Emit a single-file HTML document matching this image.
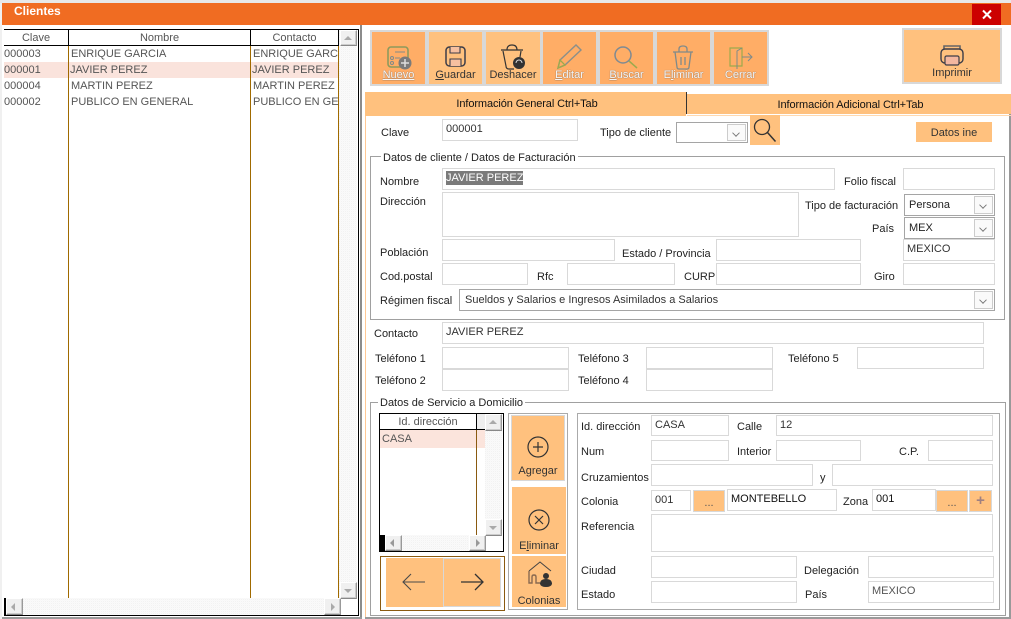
<!DOCTYPE html>
<html><head><meta charset="utf-8"><style>
html,body{margin:0;padding:0;background:#fff;width:1011px;height:619px;overflow:hidden}
body{position:relative;font:11px/14px "Liberation Sans",sans-serif;color:#222}
div,span.a,svg{position:absolute;box-sizing:border-box}
.l{white-space:nowrap;color:#222;margin-top:1px}
.i{border:1px solid #d9d9d9;background:#fff;padding:2px 0 0 3px;white-space:nowrap;color:#333;line-height:14px;overflow:hidden}
.c{border:1px solid #a5a5a5;background:#fff;padding:3px 0 0 4px;color:#222;white-space:nowrap}
.cb{position:absolute;right:1px;top:1px;bottom:1px;width:17px;border:1px solid #ccc;background:#fafafa}
.cb:after{content:"";position:absolute;left:5px;top:5px;width:5px;height:5px;border-right:1px solid #777;border-bottom:1px solid #777;transform:rotate(45deg) scale(.9)}
.tb{border:2px solid #d8d8d8;background:#ffad66;text-align:center;color:#f6f6f6}
.tb.lt{background:#ffc17e;color:#333}
.tb span{position:absolute;left:0;right:0;top:36px;font-size:11px;line-height:14px;text-shadow:0 0 1px #555}
.tb.lt span{text-shadow:none}
.tb svg{left:0;top:0}
.o{background:#ffc17e;text-align:center;color:#333}
.sb{background:#f0f0f0;border:1px solid;border-color:#fff #999 #888 #fff;box-shadow:inset -1px -1px #ccc}
.t{width:0;height:0}
.hatch{background:#fafafa;background-image:linear-gradient(45deg,#f0f0f0 25%,transparent 25%,transparent 75%,#f0f0f0 75%);background-size:2px 2px}
.r{color:#555;white-space:nowrap;overflow:hidden;line-height:14px}
.b{background:#000}.br{background:#a06a00}
.g{border:1px solid #a0a0a0}
.lg{background:#fff;padding:0 2px;white-space:nowrap;color:#222;margin-top:1px}
</style></head><body>
<!-- title -->
<div style="left:0;top:0;width:1011px;height:3px;background:#e8e8e8"></div>
<div style="left:0;top:3px;width:2px;height:616px;background:#f0f0f0"></div>
<div style="left:2px;top:3px;width:1009px;height:22px;background:#f06c22"></div>
<div style="left:14px;top:4px;font-size:12px;font-weight:bold;color:#fff;line-height:15px">Clientes</div>
<div style="left:972px;top:4px;width:29px;height:21px;background:#cc0000"></div>
<svg style="left:972px;top:4px" width="29" height="21"><path d="M11 6.5l8 8M19 6.500l-8 8" stroke="#fff" stroke-width="2"/></svg>

<!-- grid -->
<div style="left:4px;top:62px;width:335px;height:16px;background:#fae3dc"></div>
<div style="left:4px;top:29px;width:355px;height:1px;background:#000"></div>
<div style="left:4px;top:45px;width:335px;height:1px;background:#000"></div>
<div class="r" style="left:4px;top:31px;width:64px;text-align:center">Clave</div>
<div class="r" style="left:69px;top:31px;width:181px;text-align:center">Nombre</div>
<div class="r" style="left:251px;top:31px;width:87px;text-align:center">Contacto</div>
<div class="b" style="left:68px;top:29px;width:1px;height:16px"></div>
<div class="b" style="left:250px;top:29px;width:1px;height:16px"></div>
<div class="b" style="left:338px;top:29px;width:1px;height:16px"></div>
<div class="br" style="left:68px;top:46px;width:1px;height:552px"></div>
<div class="br" style="left:250px;top:46px;width:1px;height:552px"></div>
<div class="br" style="left:338px;top:46px;width:1px;height:552px"></div>
<div class="r" style="left:4px;top:47px;width:63px">000003</div>
<div class="r" style="left:71px;top:47px;width:178px">ENRIQUE GARCIA</div>
<div class="r" style="left:253px;top:47px;width:85px">ENRIQUE GARCIA</div>
<div class="r" style="left:4px;top:63px;width:63px">000001</div>
<div class="r" style="left:70px;top:63px;width:178px">JAVIER PEREZ</div>
<div class="r" style="left:252px;top:63px;width:85px">JAVIER PEREZ</div>
<div class="r" style="left:4px;top:79px;width:63px">000004</div>
<div class="r" style="left:71px;top:79px;width:178px">MARTIN PEREZ</div>
<div class="r" style="left:253px;top:79px;width:85px">MARTIN PEREZ</div>
<div class="r" style="left:4px;top:95px;width:63px">000002</div>
<div class="r" style="left:71px;top:95px;width:178px">PUBLICO EN GENERAL</div>
<div class="r" style="left:253px;top:95px;width:85px">PUBLICO EN GENERAL</div>
<!-- grid scrollbars -->
<div class="hatch" style="left:339px;top:30px;width:18px;height:568px"></div>
<div class="sb" style="left:340px;top:30px;width:17px;height:16px"></div>
<div class="t" style="left:344px;top:36px;border:4px solid transparent;border-top:0;border-bottom:4px solid #aaa"></div>
<div class="sb" style="left:340px;top:582px;width:17px;height:17px"></div>
<div class="t" style="left:344px;top:589px;border:4px solid transparent;border-bottom:0;border-top:4px solid #aaa"></div>
<div class="hatch" style="left:5px;top:598px;width:335px;height:17px"></div>
<div class="sb" style="left:6px;top:598px;width:17px;height:17px"></div>
<div class="t" style="left:11px;top:603px;border:4px solid transparent;border-left:0;border-right:4px solid #aaa"></div>
<div class="sb" style="left:324px;top:598px;width:17px;height:17px"></div>
<div class="t" style="left:331px;top:603px;border:4px solid transparent;border-right:0;border-left:4px solid #aaa"></div>
<div class="b" style="left:4px;top:598px;width:2px;height:18px"></div>
<div class="b" style="left:4px;top:615px;width:355px;height:1px"></div>
<div class="b" style="left:358px;top:29px;width:1px;height:587px"></div>
<div style="left:360px;top:25px;width:2px;height:593px;background:#8c8c8c"></div>
<div style="left:2px;top:617px;width:360px;height:2px;background:#9a9a9a"></div>
<div style="left:365px;top:115px;width:1px;height:504px;background:#ffc894"></div>
<div style="left:1009px;top:94px;width:2px;height:525px;background:#999"></div>
<div style="left:365px;top:617px;width:646px;height:2px;background:#9a9a9a"></div>

<!-- toolbar -->
<div class="tb" style="left:370px;top:30px;width:57px;height:56px"><svg width="53" height="52"><rect x="16" y="15" width="20" height="20" rx="3" fill="none" stroke="#8d9a5c" stroke-width="1.6"/><path d="M23 20h10M23 26h5" stroke="#7f8a8a"/><circle cx="20" cy="26" r="1.500" fill="none" stroke="#7f8a8a"/><circle cx="20" cy="31" r="1.500" fill="none" stroke="#7f8a8a"/><circle cx="33" cy="31" r="6.500" fill="#7a7a7a"/><path d="M33 27v8M29 31h8" stroke="#ddd" stroke-width="1.500"/></svg><span style="text-decoration:underline;text-decoration-thickness:1px;text-decoration-skip-ink:none">Nuevo</span></div>
<div class="tb lt" style="left:427px;top:30px;width:57px;height:56px"><svg width="53" height="52"><rect x="17" y="15" width="19" height="19" rx="3.500" fill="none" stroke="#3d3d48" stroke-width="1.500"/><path d="M21 15v6h10v-6M21 34v-7h11v7" fill="#f6c0a0" stroke="#3d3d48" stroke-width="1.100"/></svg><span><u>G</u>uardar</span></div>
<div class="tb lt" style="left:484px;top:30px;width:58px;height:56px"><svg width="54" height="52"><path d="M15 18h22M17 19l3 15q0 3 3 3h5M35 19l-1 6M21 18q0-5 5-5t5 5" fill="none" stroke="#333" stroke-width="1.200"/><circle cx="33" cy="31" r="6" fill="#333"/><path d="M30 31a3 3 0 0 1 6 0" fill="none" stroke="#ddd"/></svg><span>Deshacer</span></div>
<div class="tb" style="left:541px;top:30px;width:57px;height:56px"><svg width="53" height="52"><path d="M15 36l2-8 16-15 5 5-16 15z" fill="none" stroke="#8a8f8a" stroke-width="1.400"/><path d="M15 36l2-8 5 5z" fill="none" stroke="#9caa4d" stroke-width="1.300"/></svg><span><u>E</u>ditar</span></div>
<div class="tb" style="left:598px;top:30px;width:57px;height:56px"><svg width="53" height="52"><circle cx="23" cy="23" r="8" fill="none" stroke="#7f8a92" stroke-width="1.500"/><path d="M29 29l8 7" stroke="#9caa4d" stroke-width="1.500"/></svg><span><u>B</u>uscar</span></div>
<div class="tb" style="left:655px;top:30px;width:57px;height:56px"><svg width="53" height="52"><path d="M16 20h20M22 20v-3q0-3 4-3t4 3v3M18 20l2 15q0 2 2 2h8q2 0 2-2l2-15M24 25v8M28 25v8" fill="none" stroke="#7f8a8a" stroke-width="1.300"/></svg><span>E<u>l</u>iminar</span></div>
<div class="tb" style="left:712px;top:30px;width:57px;height:56px"><svg width="53" height="52"><path d="M16 16h12v18h-12z" fill="none" stroke="#9caa4d" stroke-width="1.200"/><path d="M28 16l-5 3v18" fill="none" stroke="#7f8a8a" stroke-width="1"/><path d="M28 25h10M34 21l4 4-4 4" fill="none" stroke="#7f8a8a" stroke-width="1"/></svg><span>Cerrar</span></div>
<div class="tb lt" style="left:902px;top:28px;width:100px;height:56px"><svg width="96" height="52"><path d="M40 19v-3h16v3" fill="none" stroke="#666" stroke-width="1.600"/><rect x="37" y="19" width="22" height="14" rx="4" fill="none" stroke="#3d3d48" stroke-width="1.400"/><rect x="41" y="26" width="14" height="9" rx="1.500" fill="#f3b7a0" stroke="#3d3d48" stroke-width="1.200"/></svg><span style="top:36px">Imprimir</span></div>

<!-- tabs -->
<div style="left:365px;top:92px;width:321px;height:24px;background:#ffc17e;text-align:center;padding-top:5px;padding-left:3px;color:#111;letter-spacing:-.1px">Información General Ctrl+Tab</div>
<div style="left:686px;top:92px;width:1px;height:22px;background:#333"></div>
<div style="left:687px;top:94px;width:324px;height:20px;background:#ffc17e;text-align:center;padding-top:4px;padding-left:3px;color:#111;letter-spacing:-.1px">Información Adicional Ctrl+Tab</div>
<div style="left:687px;top:115px;width:324px;height:1px;background:#ffd9b0"></div>

<div class="l" style="left:381px;top:125px">Clave</div>
<div class="i" style="left:442px;top:119px;width:136px;height:22px">000001</div>
<div class="l" style="left:600px;top:125px">Tipo de cliente</div>
<div class="c" style="left:676px;top:122px;width:72px;height:21px"><i class="cb"></i></div>
<div class="o" style="left:750px;top:115px;width:30px;height:30px"></div>
<svg style="left:750px;top:115px" width="30" height="30"><circle cx="12" cy="12" r="7.500" fill="none" stroke="#333" stroke-width="1.300"/><path d="M17.500 17.500l8 9" stroke="#333" stroke-width="1.500"/></svg>
<div class="o" style="left:916px;top:122px;width:76px;height:20px;padding-top:4px">Datos ine</div>

<!-- group 1 -->
<div class="g" style="left:370px;top:156px;width:635px;height:164px"></div>
<div class="lg" style="left:381px;top:150px">Datos de cliente / Datos de Facturación</div>
<div class="l" style="left:380px;top:174px">Nombre</div>
<div class="i" style="left:442px;top:168px;width:393px;height:22px"><span style="background:#7a7a7a;color:#fff;display:inline-block;height:14px">JAVIER PEREZ</span></div>
<div class="l" style="left:844px;top:174px">Folio fiscal</div>
<div class="i" style="left:903px;top:168px;width:92px;height:22px"></div>
<div class="l" style="left:380px;top:194px">Dirección</div>
<div class="i" style="left:442px;top:192px;width:357px;height:45px"></div>
<div class="l" style="left:805px;top:198px">Tipo de facturación</div>
<div class="c" style="left:904px;top:194px;width:91px;height:22px">Persona<i class="cb"></i></div>
<div class="l" style="left:872px;top:221px">País</div>
<div class="c" style="left:904px;top:217px;width:91px;height:22px">MEX<i class="cb"></i></div>
<div class="l" style="left:380px;top:245px">Población</div>
<div class="i" style="left:442px;top:239px;width:173px;height:22px"></div>
<div class="l" style="left:622px;top:246px">Estado / Provincia</div>
<div class="i" style="left:716px;top:239px;width:145px;height:22px"></div>
<div class="i" style="left:903px;top:239px;width:92px;height:22px">MEXICO</div>
<div class="l" style="left:380px;top:269px">Cod.postal</div>
<div class="i" style="left:442px;top:263px;width:86px;height:22px"></div>
<div class="l" style="left:537px;top:269px">Rfc</div>
<div class="i" style="left:567px;top:263px;width:108px;height:22px"></div>
<div class="l" style="left:684px;top:269px">CURP</div>
<div class="i" style="left:716px;top:263px;width:145px;height:22px"></div>
<div class="l" style="left:874px;top:269px">Giro</div>
<div class="i" style="left:903px;top:263px;width:92px;height:22px"></div>
<div class="l" style="left:380px;top:293px">Régimen fiscal</div>
<div class="c" style="left:459px;top:289px;width:536px;height:22px;padding-left:5px;color:#333">Sueldos y Salarios e Ingresos Asimilados a Salarios<i class="cb"></i></div>

<!-- contact -->
<div class="l" style="left:374px;top:326px">Contacto</div>
<div class="i" style="left:442px;top:322px;width:542px;height:22px">JAVIER PEREZ</div>
<div class="l" style="left:375px;top:351px">Teléfono 1</div>
<div class="i" style="left:442px;top:347px;width:127px;height:22px"></div>
<div class="l" style="left:578px;top:351px">Teléfono 3</div>
<div class="i" style="left:646px;top:347px;width:127px;height:22px"></div>
<div class="l" style="left:788px;top:351px">Teléfono 5</div>
<div class="i" style="left:857px;top:347px;width:127px;height:22px"></div>
<div class="l" style="left:375px;top:373px">Teléfono 2</div>
<div class="i" style="left:442px;top:369px;width:127px;height:22px"></div>
<div class="l" style="left:578px;top:373px">Teléfono 4</div>
<div class="i" style="left:646px;top:369px;width:127px;height:22px"></div>

<!-- group 2 -->
<div class="g" style="left:370px;top:402px;width:636px;height:214px"></div>
<div class="lg" style="left:378px;top:395px">Datos de Servicio a Domicilio</div>

<div style="left:379px;top:413px;width:125px;height:139px;border:1px solid #000;background:#fff"></div>
<div class="r" style="left:380px;top:415px;width:96px;text-align:center">Id. dirección</div>
<div class="b" style="left:380px;top:429px;width:105px;height:1px"></div>
<div class="b" style="left:476px;top:414px;width:1px;height:15px"></div>
<div style="left:477px;top:414px;width:8px;height:15px;background:#eee"></div>
<div style="left:380px;top:430px;width:105px;height:18px;background:#fbe4dc"></div>
<div class="r" style="left:382px;top:432px">CASA</div>
<div style="left:476px;top:430px;width:1px;height:105px;background:#8a5a10"></div>
<div class="hatch" style="left:485px;top:414px;width:17px;height:121px"></div>
<div class="sb" style="left:485px;top:414px;width:17px;height:17px"></div>
<div class="t" style="left:489px;top:420px;border:4px solid transparent;border-top:0;border-bottom:4px solid #aaa"></div>
<div class="sb" style="left:485px;top:519px;width:17px;height:17px"></div>
<div class="t" style="left:489px;top:526px;border:4px solid transparent;border-bottom:0;border-top:4px solid #aaa"></div>
<div class="hatch" style="left:385px;top:535px;width:100px;height:16px"></div>
<div class="b" style="left:380px;top:535px;width:5px;height:16px"></div>
<div class="sb" style="left:385px;top:535px;width:17px;height:16px"></div>
<div class="t" style="left:390px;top:539px;border:4px solid transparent;border-left:0;border-right:4px solid #999"></div>
<div class="sb" style="left:469px;top:535px;width:17px;height:16px"></div>
<div class="t" style="left:476px;top:539px;border:4px solid transparent;border-right:0;border-left:4px solid #999"></div>

<div style="left:380px;top:556px;width:125px;height:55px;border:1px solid #8a5a10"></div>
<div class="o" style="left:386px;top:558px;width:57px;height:49px"></div>
<div class="o" style="left:443px;top:558px;width:58px;height:49px;border:1px solid #d8d8d8"></div>
<svg style="left:386px;top:558px" width="115" height="49"><path d="M17 24h22M25 16l-8 8 8 8" fill="none" stroke="#4a4a4a" stroke-width="1.100"/><path d="M75 24h22M89 16l8 8-8 8" fill="none" stroke="#333" stroke-width="1.300"/></svg>

<div style="left:508px;top:413px;width:60px;height:197px;border:1px solid #aaa"></div>
<div class="o" style="left:511px;top:415px;width:54px;height:66px;border:1px solid #d8d8d8"></div>
<svg style="left:511px;top:415px" width="54" height="45"><circle cx="27" cy="32" r="10" fill="none" stroke="#333" stroke-width="1.200"/><path d="M27 27v10M22 32h10" stroke="#333" stroke-width="1.200"/></svg>
<div class="l" style="left:511px;top:463px;width:54px;text-align:center;color:#333">Agregar</div>
<div class="o" style="left:512px;top:487px;width:54px;height:67px"></div>
<svg style="left:512px;top:487px" width="54" height="45"><circle cx="27" cy="33" r="10" fill="none" stroke="#333" stroke-width="1.200"/><path d="M23 29l8 8M31 29l-8 8" stroke="#333" stroke-width="1.200"/></svg>
<div class="l" style="left:512px;top:538px;width:54px;text-align:center;color:#333">E<u>l</u>iminar</div>
<div class="o" style="left:512px;top:556px;width:54px;height:51px"></div>
<svg style="left:512px;top:556px" width="54" height="34"><path d="M17 15l11-9 11 9" fill="none" stroke="#444" stroke-width="1"/><path d="M17 15v12h3v-6q0-2 2-2t2 2v6h4" fill="none" stroke="#8a6a50" stroke-width="1.400"/><circle cx="34" cy="20" r="3" fill="#333"/><path d="M28 28q0-5 6-5t6 5q-1 3-6 3t-6-3z" fill="#333"/></svg>
<div class="l" style="left:512px;top:593px;width:54px;text-align:center;color:#333">Colonias</div>

<!-- address -->
<div style="left:577px;top:413px;width:423px;height:197px;border:1px solid #aaa"></div>
<div class="l" style="left:581px;top:419px">Id. dirección</div>
<div class="i" style="left:651px;top:415px;width:78px;height:21px">CASA</div>
<div class="l" style="left:737px;top:419px">Calle</div>
<div class="i" style="left:776px;top:415px;width:217px;height:21px">12</div>
<div class="l" style="left:581px;top:444px">Num</div>
<div class="i" style="left:651px;top:440px;width:78px;height:21px"></div>
<div class="l" style="left:737px;top:444px">Interior</div>
<div class="i" style="left:776px;top:440px;width:85px;height:21px"></div>
<div class="l" style="left:899px;top:444px">C.P.</div>
<div class="i" style="left:928px;top:440px;width:65px;height:21px"></div>
<div class="l" style="left:581px;top:470px">Cruzamientos</div>
<div class="i" style="left:651px;top:464px;width:162px;height:22px"></div>
<div class="l" style="left:820px;top:470px">y</div>
<div class="i" style="left:832px;top:464px;width:161px;height:22px"></div>
<div class="l" style="left:581px;top:494px">Colonia</div>
<div class="i" style="left:651px;top:490px;width:40px;height:21px">001</div>
<div class="o" style="left:693px;top:490px;width:32px;height:22px;border:1px solid #d8d8d8;padding-top:5px;color:#555">...</div>
<div class="i" style="left:727px;top:489px;width:110px;height:22px;color:#111">MONTEBELLO</div>
<div class="l" style="left:843px;top:494px">Zona</div>
<div class="i" style="left:872px;top:489px;width:64px;height:22px;color:#111">001</div>
<div class="o" style="left:936px;top:490px;width:32px;height:22px;border:1px solid #d8d8d8;padding-top:5px;color:#555">...</div>
<div class="o" style="left:969px;top:490px;width:23px;height:22px;border:1px solid #d8d8d8;padding-top:3px;color:#a08080;font-size:15px;font-weight:bold">+</div>
<div class="l" style="left:581px;top:519px">Referencia</div>
<div class="i" style="left:651px;top:514px;width:342px;height:38px"></div>
<div class="l" style="left:581px;top:563px">Ciudad</div>
<div class="i" style="left:651px;top:556px;width:146px;height:22px"></div>
<div class="l" style="left:804px;top:563px">Delegación</div>
<div class="i" style="left:868px;top:556px;width:126px;height:22px"></div>
<div class="l" style="left:581px;top:587px">Estado</div>
<div class="i" style="left:651px;top:581px;width:146px;height:22px"></div>
<div class="l" style="left:805px;top:587px">País</div>
<div class="i" style="left:868px;top:581px;width:126px;height:22px;color:#555">MEXICO</div>
</body></html>
